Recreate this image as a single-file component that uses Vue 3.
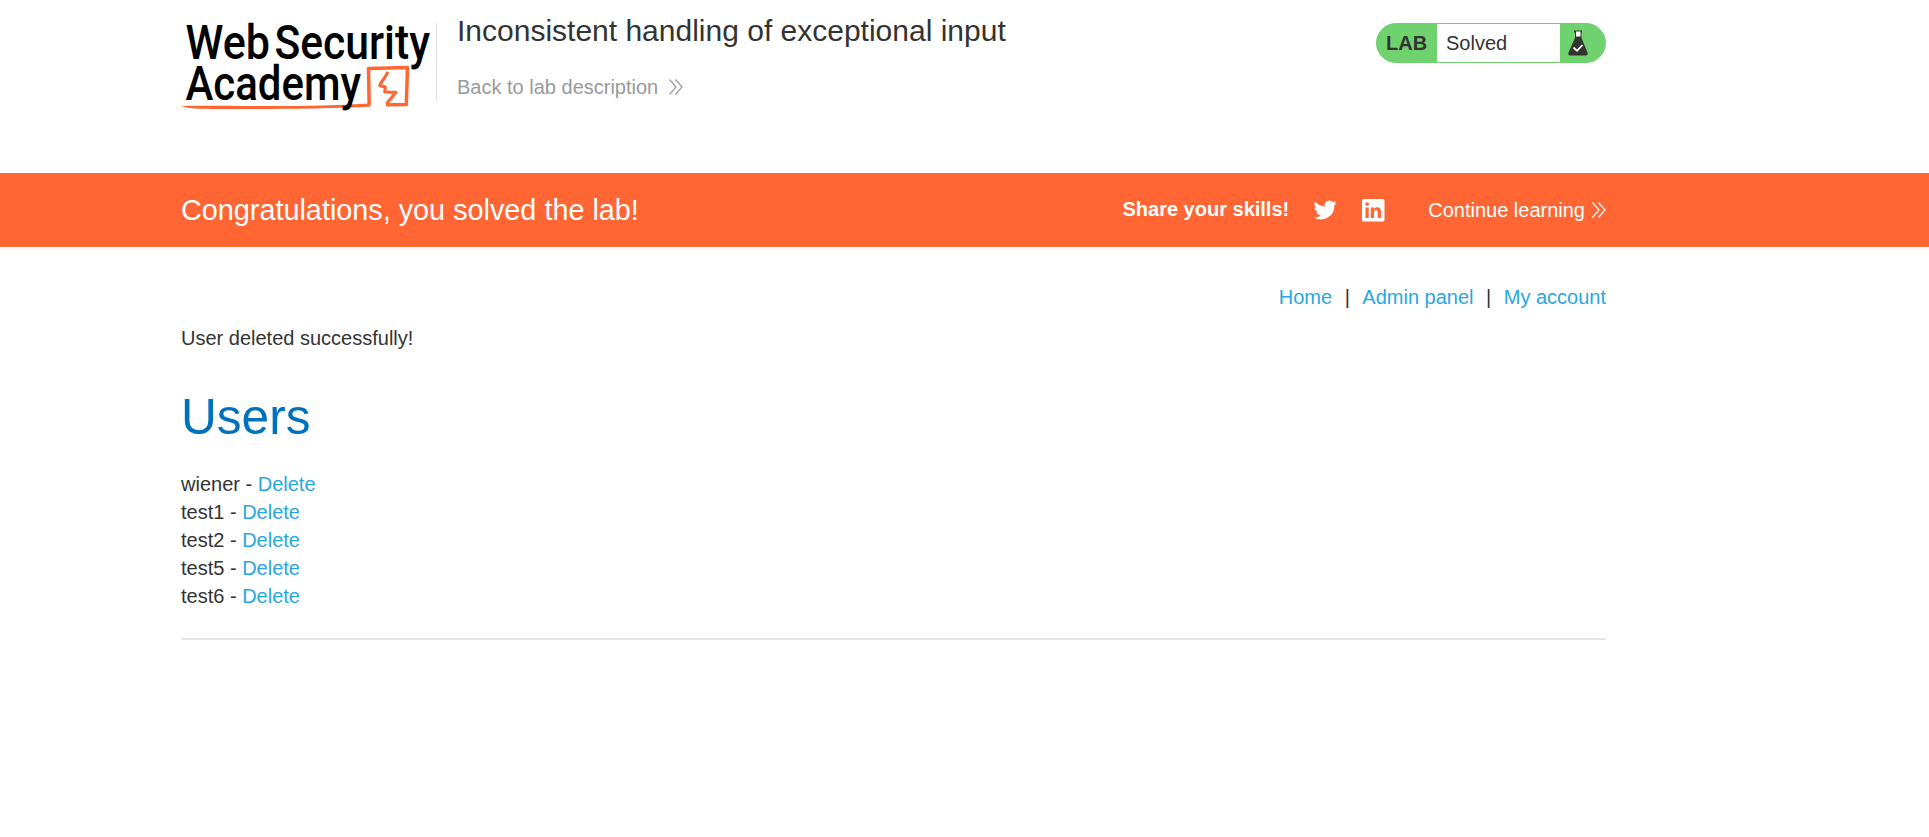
<template>
  <div class="page">
    <header class="container lab-header">
      <svg class="logo" width="255" height="112" viewBox="181 0 255 112">
        <g fill="none" stroke="#ff6633" stroke-linejoin="round">
          <path d="M369.200 105.500L368.500 68.500L407.500 67.500L406.300 104.500L386 104.700" stroke-width="3.500" />
          <path d="M387.500 71.800C386.500 77 380 82.500 379.800 85.500C382 87 385 85.500 385.300 87.500L384.800 92L396 92.300L386.500 103.800" stroke-width="3.200" />
        </g>
        <path d="M181.500 106C230 105 300 108 370 103.500V106.800C320 109 240 109.500 202 108.800C192 108.500 187 108 181.500 106Z" fill="#ff6633" />
        <g class="logo-text">
          <text x="185.500" y="59" textLength="84.500" lengthAdjust="spacingAndGlyphs">Web</text>
          <text x="274.500" y="59" textLength="155.500" lengthAdjust="spacingAndGlyphs">Security</text>
          <text x="185.500" y="99.700" textLength="175.500" lengthAdjust="spacingAndGlyphs">Academy</text>
        </g>
      </svg>
      <div class="title-box">
        <h2>Inconsistent handling of exceptional input</h2>
        <a class="back" href="#">
          <span>Back to lab description</span>
          <svg width="14" height="16" viewBox="0 0 14 16"><path :d="chevrons" /></svg>
        </a>
      </div>
      <div class="lab-status">
        <span class="lab-tag">LAB</span>
        <p>Solved</p>
        <svg width="20" height="26" viewBox="0 0 20 26">
          <path d="M6 .5H14V2.500H13.500V8L19.500 22.500Q20.500 25.500 17.500 25.500H2.500Q-.5 25.500 .5 22.500L7 8V2.500H6Z" fill="#333332" />
          <path d="M8 1.500H12.500V6.500H8Z" fill="#fff" />
          <path d="M5.500 17.500L9 20.800L14.500 15" fill="none" stroke="#fff" stroke-width="1.800" />
        </svg>
      </div>
    </header>

    <section class="banner">
      <div class="container banner-inner">
        <h4>Congratulations, you solved the lab!</h4>
        <span class="share">Share your skills!</span>
        <a class="twitter" href="#">
          <svg width="24" height="24" viewBox="0 0 24 24">
            <path d="M23.600 4.900c-.8.400-1.800.7-2.700.8 1-.6 1.700-1.500 2.100-2.600-.9.500-1.900.9-3 1.100a4.700 4.700 0 0 0-8.100 4.300C8 8.300 4.500 6.400 2.200 3.600a4.700 4.700 0 0 0 1.500 6.300c-.8 0-1.500-.2-2.100-.6 0 2.300 1.600 4.300 3.800 4.700-.7.200-1.400.2-2.100.1.600 1.900 2.300 3.200 4.400 3.300A9.500 9.500 0 0 1 .7 19.300 13.400 13.400 0 0 0 21.300 7.400c.9-.7 1.700-1.500 2.300-2.500z" />
          </svg>
        </a>
        <a class="linkedin" href="#">
          <svg width="23" height="23" viewBox="0 0 23 23">
            <path fill-rule="evenodd" d="M2 0H21Q22.500 0 22.500 1.500V21Q22.500 22.500 21 22.500H1.500Q0 22.500 0 21V1.500Q0 0 2 0ZM3.500 8.500V19H6.700V8.500ZM5.100 3.200A1.900 1.900 0 1 0 5.100 7A1.900 1.900 0 1 0 5.100 3.200ZM8.800 8.500V19H12V13.500C12 10.200 15.700 10.400 15.700 13.400V19H19V12.500C19 7.500 13.700 7.300 12 9.900V8.500Z" />
          </svg>
        </a>
        <a class="continue" href="#">
          <span>Continue learning</span>
          <svg width="14" height="16" viewBox="0 0 14 16"><path :d="chevrons" /></svg>
        </a>
      </div>
    </section>

    <main class="container">
      <nav class="top-links">
        <template v-for="(link, i) in links" :key="link">
          <span v-if="i" class="sep">|</span>
          <a href="#">{{ link }}</a>
        </template>
      </nav>
      <p class="message">User deleted successfully!</p>
      <h1>Users</h1>
      <div v-for="user in users" :key="user" class="user">
        <span>{{ user }} - </span>
        <a href="#">Delete</a>
      </div>
      <hr>
    </main>
  </div>
</template>

<script setup>
const links = ['Home', 'Admin panel', 'My account']
const users = ['wiener', 'test1', 'test2', 'test5', 'test6']

const chevrons = 'M.5 .5L7 8L.5 15.500M6.500 .5L13 8L6.500 15.500'
</script>

<style>
body { background: #fff; }
</style>

<style scoped>
.page {
  font: 20px/28px "Liberation Sans", Arial, sans-serif;
  color: #333332;
}
.container {
  width: 1425px;
  margin-left: 181px;
}
h1, h2, h4, p { margin: 0; font-weight: 400; }
a { color: #29a7e1; text-decoration: none; }
svg { display: block; overflow: visible; }

.lab-header {
  display: flex;
  align-items: flex-start;
  height: 173px;
}
.logo-text {
  font: 500 48px Roboto, sans-serif;
  fill: #000;
}
.title-box {
  height: 78px;
  margin-top: 23px;
  padding-left: 20px;
  border-left: 1px solid #dedede;
}
.title-box h2 {
  margin-top: -10px;
  font-size: 30px;
  line-height: 36px;
}
.back {
  display: flex;
  gap: 11px;
  margin-top: 24px;
  color: #999;
}
.back svg, .continue svg {
  margin-top: 6px;
  fill: none;
  stroke: currentColor;
  stroke-width: 1.2;
}

.lab-status {
  display: flex;
  align-items: center;
  box-sizing: border-box;
  width: 230px;
  height: 40px;
  margin: 23px 0 0 auto;
  border: 1px solid #70d26e;
  border-radius: 20px;
  background: #70d26e;
}
.lab-tag {
  width: 51px;
  padding-left: 9px;
  font-weight: 700;
}
.lab-status p {
  box-sizing: border-box;
  width: 123px;
  padding-left: 9px;
  line-height: 38px;
  background: #fff;
}
.lab-status svg { margin-left: 8px; }

.banner {
  background: #ff6633;
  color: #fff;
}
.banner a { color: #fff; fill: #fff; }
.banner-inner {
  display: flex;
  align-items: center;
  height: 74px;
}
.banner h4 {
  font-size: 28.8px;
  line-height: 30px;
}
.share {
  margin: -2px 0 0 auto;
  font-weight: 700;
}
.twitter { margin-left: 24px; }
.linkedin { margin-left: 25px; }
.continue {
  display: flex;
  gap: 7px;
  margin-left: 43px;
}

.top-links {
  display: flex;
  justify-content: flex-end;
  padding-top: 36px;
}
.sep { margin: 0 12.5px; }
.message { margin-top: 13px; }
h1 {
  margin: 30px 0 18px;
  font-size: 49.6px;
  line-height: 70px;
  color: #0071bc;
}
.user { white-space: pre-wrap; }
hr {
  height: 2px;
  margin: 28px 0 0;
  border: 0;
  background: #e5e5e5;
}
</style>
